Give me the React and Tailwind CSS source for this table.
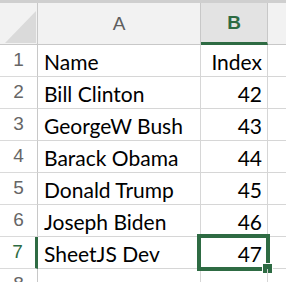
import React from "react";

const rows = [
  ["Name", "Index"],
  ["Bill Clinton", 42],
  ["GeorgeW Bush", 43],
  ["Barack Obama", 44],
  ["Donald Trump", 45],
  ["Joseph Biden", 46],
  ["SheetJS Dev", 47],
  ["", ""],
];

const cellFont = { fontFamily: "Lato, 'Open Sans', sans-serif" };

export default function App() {
  return (
    <div className="w-[286px] h-[282px] overflow-hidden bg-white border-t-[3px] border-[#cfcfcf]">
      <div className="grid grid-cols-[38px_163px_67px_1fr] grid-rows-[42px_repeat(8,32px)]">
        {/* corner */}
        <div className="relative bg-[#f2f2f2] border-r border-b border-[#c8c8c8]">
          <svg className="absolute left-[5px] top-[8px]" width="31" height="32" viewBox="0 0 31 32">
            <polygon points="0,32 31,32 31,0" fill="#dadada" />
          </svg>
        </div>
        <div className="flex items-center justify-center pt-[2px] bg-[#f2f2f2] border-r border-b border-[#c8c8c8] text-[19px] text-[#5f5f5f] font-['Liberation_Sans',sans-serif]">
          A
        </div>
        <div className="flex items-center justify-center pt-[2px] bg-[#e3e3e3] border-r border-[#c8c8c8] border-b-[3px] border-b-[#2e6b43] text-[19px] font-semibold text-[#2e6b43] font-['Liberation_Sans',sans-serif]">
          B
        </div>
        <div className="bg-[#f2f2f2] border-b border-[#c8c8c8]" />

        {rows.map((r, i) => {
          const sel = i === 6;
          return (
            <React.Fragment key={i}>
              <div
                className={
                  "flex items-center justify-center bg-white border-b border-[#dadada] text-[19px] font-['Liberation_Sans',sans-serif] " +
                  (sel
                    ? "border-r-[3px] border-r-[#2e6b43] text-[#2e6b43]"
                    : "border-r border-r-[#c8c8c8] text-[#666666]")
                }
              >
                {i + 1}
              </div>
              <div
                className="flex items-center pl-[6px] pt-[2px] border-r border-b border-[#d6d6d6] text-[21px] text-black"
                style={cellFont}
              >
                {r[0]}
              </div>
              <div
                className="relative flex items-center justify-end pr-[5px] pt-[2px] border-r border-b border-[#d6d6d6] text-[21px] text-black"
                style={cellFont}
              >
                {r[1]}
                {sel && (
                  <>
                    <div className="absolute left-[-4px] top-[-3px] right-[-3px] bottom-[-3px] border-[4px] border-[#2e6b43]" />
                    <div className="absolute right-[-6px] bottom-[-6px] w-[11px] h-[11px] bg-[#2e6b43] border border-white" />
                  </>
                )}
              </div>
              <div className="border-b border-[#d6d6d6]" />
            </React.Fragment>
          );
        })}
      </div>
    </div>
  );
}
